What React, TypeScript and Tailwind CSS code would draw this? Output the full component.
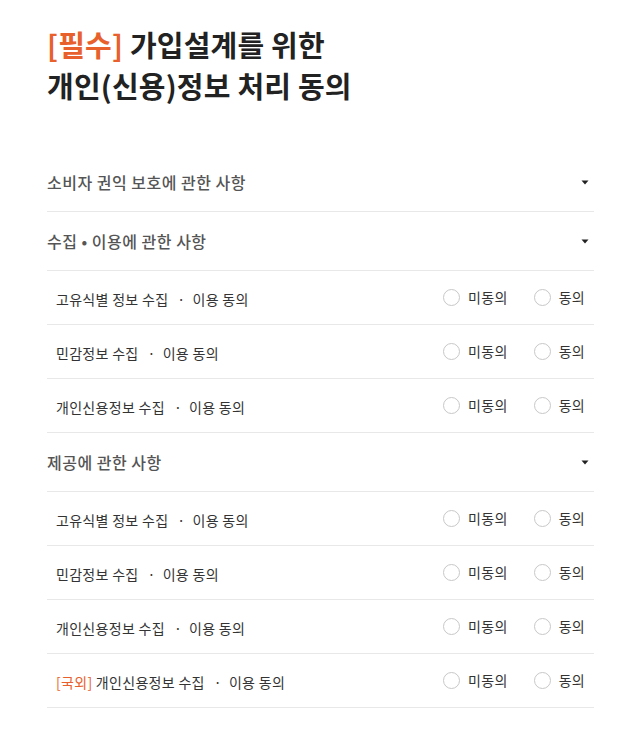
import React from "react";

const font = { fontFamily: '"Noto Sans CJK KR", "Noto Sans", sans-serif' };

function Caret() {
  return (
    <svg width="8" height="5" viewBox="0 0 8 5" className="mr-[5px]">
      <path d="M0.5 0.5 L7.5 0.5 L4 4.5 Z" fill="#222" />
    </svg>
  );
}

function Header({ title }: { title: string }) {
  return (
    <div className="flex items-center justify-between h-[59px] border-b border-[#e8e8e8]">
      <span className="text-[16px] tracking-[0.5px] font-medium text-[#555]">{title}</span>
      <Caret />
    </div>
  );
}

function Radio({ label }: { label: string }) {
  return (
    <label className="flex items-center gap-[8px]">
      <span className="w-[17px] h-[17px] rounded-full border border-[#c8c8c8] bg-white" />
      <span className="text-[14px] tracking-[0.3px] text-[#333]">{label}</span>
    </label>
  );
}

function Dot() {
  return <span className="ml-[9px] mr-[7px]">·</span>;
}

function Item({ children }: { children: React.ReactNode }) {
  return (
    <div className="flex items-center justify-between h-[54px] border-b border-[#e8e8e8] pl-[9px] pr-[9px]">
      <span className="text-[14px] tracking-[0.3px] text-[#333] pt-[3px]">{children}</span>
      <div className="flex items-center gap-[26px]">
        <Radio label="미동의" />
        <Radio label="동의" />
      </div>
    </div>
  );
}

export default function App() {
  return (
    <div className="w-[638px] min-h-[730px] bg-white px-[47px] pt-[24px]" style={font}>
      <h1 className="text-[29px] leading-[41px] tracking-[0.2px] font-bold text-[#222]">
        <span className="text-[#e8602c]">[필수]</span> 가입설계를 위한
        <br />
        개인(신용)정보 처리 동의
      </h1>
      <div className="mt-[47px] w-[547px]">
        <Header title="소비자 권익 보호에 관한 사항" />
        <Header title="수집 • 이용에 관한 사항" />
        <Item>고유식별 정보 수집<Dot />이용 동의</Item>
        <Item>민감정보 수집<Dot />이용 동의</Item>
        <Item>개인신용정보 수집<Dot />이용 동의</Item>
        <Header title="제공에 관한 사항" />
        <Item>고유식별 정보 수집<Dot />이용 동의</Item>
        <Item>민감정보 수집<Dot />이용 동의</Item>
        <Item>개인신용정보 수집<Dot />이용 동의</Item>
        <Item>
          <span className="text-[#e8602c]">[국외]</span> 개인신용정보 수집<Dot />이용 동의
        </Item>
      </div>
    </div>
  );
}
